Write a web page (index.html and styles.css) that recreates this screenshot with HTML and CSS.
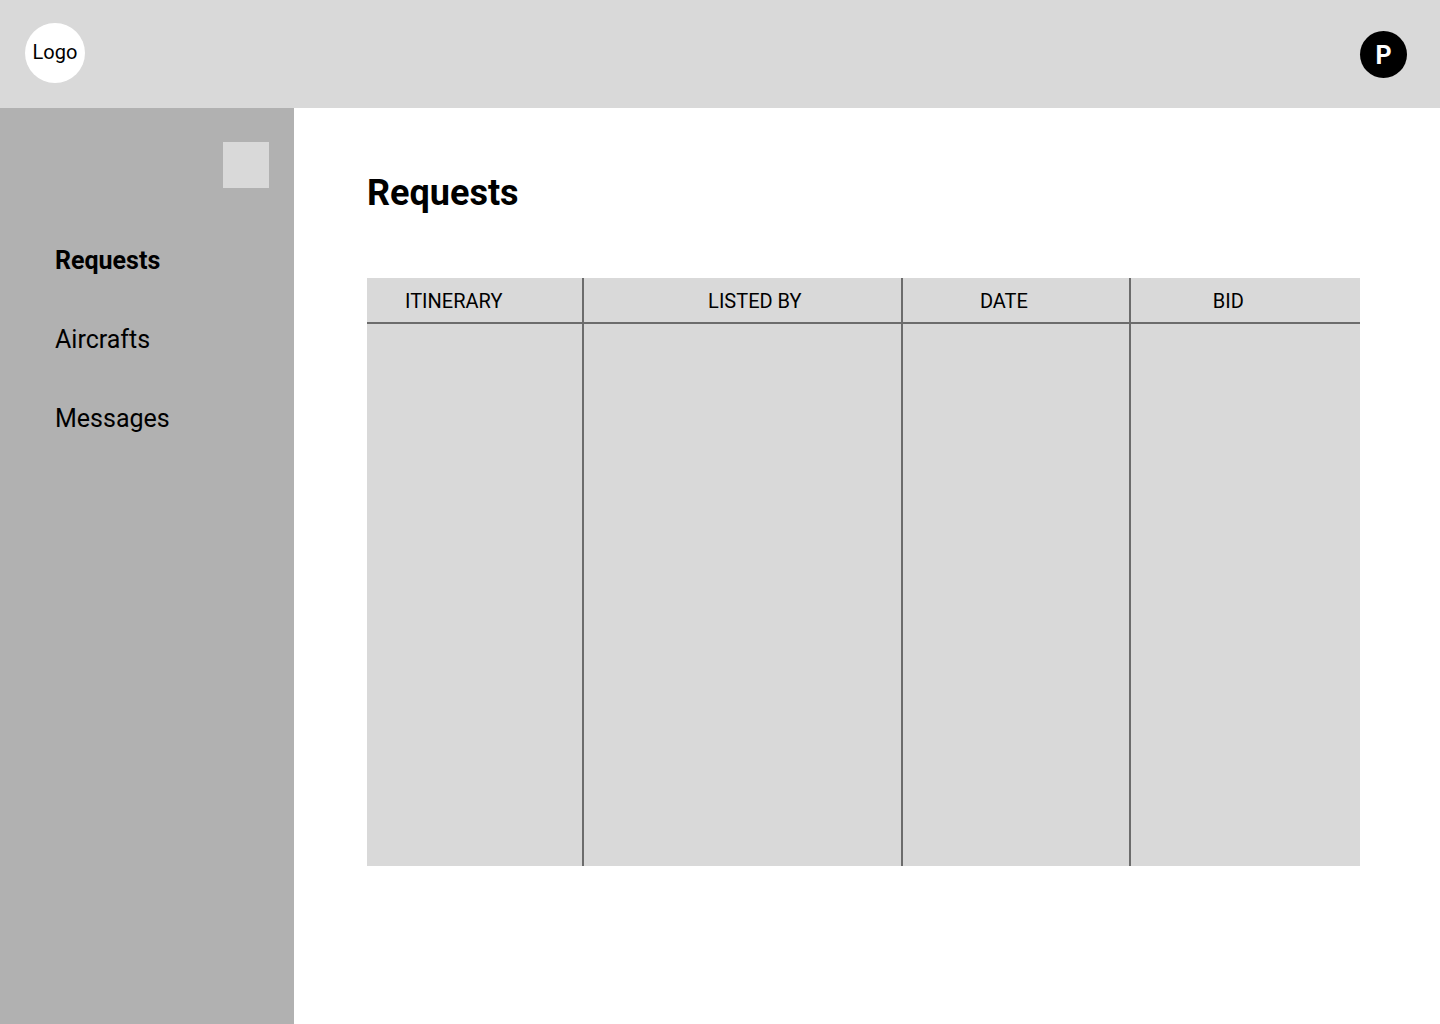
FILE: index.html
```html
<!DOCTYPE html>
<html lang="en">
<head>
<meta charset="utf-8">
<meta name="viewport" content="width=device-width, initial-scale=1">
<title>Requests</title>
<link rel="stylesheet" href="styles.css">
</head>
<body>
<header class="topbar">
  <a class="logo" href="#">Logo</a>
  <button class="profile" type="button">P</button>
</header>
<div class="shell">
  <aside class="sidebar">
    <button class="toggle" type="button" aria-label="Toggle sidebar"></button>
    <nav class="menu">
      <a class="menu-link active" href="#" aria-current="page">Requests</a>
      <a class="menu-link" href="#">Aircrafts</a>
      <a class="menu-link" href="#">Messages</a>
    </nav>
  </aside>
  <main class="content">
    <h1 class="title">Requests</h1>
    <table class="requests">
      <colgroup>
        <col class="col-itinerary">
        <col class="col-listed">
        <col class="col-date">
        <col class="col-bid">
      </colgroup>
      <thead>
        <tr>
          <th class="itinerary" scope="col">ITINERARY</th>
          <th class="listed" scope="col">LISTED BY</th>
          <th class="date" scope="col">DATE</th>
          <th class="bid" scope="col">BID</th>
        </tr>
      </thead>
      <tbody>
        <tr class="empty"><td></td><td></td><td></td><td></td></tr>
      </tbody>
    </table>
  </main>
</div>
</body>
</html>
```
FILE: styles.css
```css
* {
  box-sizing: border-box;
}

body {
  display: flex;
  flex-direction: column;
  min-height: 100vh;
  margin: 0;
  background: #fff;
  color: #000;
  font-family: Roboto, "Liberation Sans", sans-serif;
}

a {
  color: inherit;
  text-decoration: none;
}

button {
  border: 0;
  padding: 0;
  font-family: inherit;
}

.topbar {
  display: flex;
  align-items: flex-start;
  justify-content: space-between;
  padding: 23px 33px 25px 25px;
  background: #d9d9d9;
}

.logo {
  display: flex;
  align-items: center;
  justify-content: center;
  width: 60px;
  height: 60px;
  padding-bottom: 2px;
  border-radius: 50%;
  background: #fff;
  font-size: 20px;
  line-height: 24px;
}

.profile {
  width: 47px;
  height: 47px;
  margin-top: 8px;
  padding-top: 2px;
  border-radius: 50%;
  background: #000;
  color: #fff;
  font-size: 25px;
  font-weight: 700;
  line-height: 30px;
}

.shell {
  display: flex;
  flex: 1;
}

.sidebar {
  display: flex;
  flex: 0 0 294px;
  flex-direction: column;
  padding: 34px 25px 34px 55px;
  background: #b1b1b1;
}

.toggle {
  align-self: flex-end;
  width: 46px;
  height: 46px;
  background: #d9d9d9;
}

.menu {
  display: flex;
  flex-direction: column;
  gap: 49px;
  margin-top: 58px;
}

.menu-link {
  font-size: 25px;
  line-height: 30px;
}

.active {
  font-weight: 700;
}

.content {
  flex: 1;
  min-width: 0;
  padding: 64px 80px 64px 73px;
}

.title {
  margin: 0 0 64px;
  font-size: 36px;
  line-height: 42px;
}

.requests {
  width: 100%;
  border-collapse: separate;
  border-spacing: 0;
  table-layout: fixed;
  background: #d9d9d9;
}

.col-itinerary {
  width: 21.9%;
}

.col-listed {
  width: 32.1%;
}

.col-date {
  width: 22.9%;
}

.requests th {
  height: 46px;
  padding: 2px 0 0;
  border-bottom: 2px solid #6c6c6c;
  font-size: 20px;
  font-weight: 400;
  line-height: 24px;
}

.requests th:not(:last-child),
.requests td:not(:last-child) {
  border-right: 2px solid #6c6c6c;
}

.requests .itinerary {
  padding-right: 42px;
}

.requests .listed {
  padding-left: 24px;
}

.requests .date {
  padding-right: 24px;
}

.requests .bid {
  padding-right: 34px;
}

.empty td {
  height: 542px;
  padding: 0;
}
```
